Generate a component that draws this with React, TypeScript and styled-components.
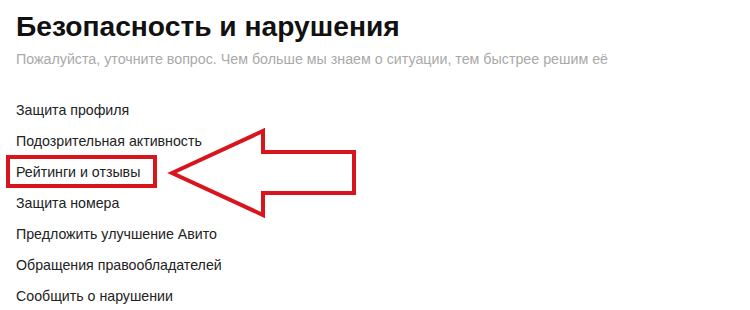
import React from "react";
import styled, { createGlobalStyle } from "styled-components";

const GlobalStyle = createGlobalStyle`
  html, body {
    margin: 0;
    padding: 0;
    background: #ffffff;
  }
  body {
    font-family: "Liberation Sans", Arial, sans-serif;
  }
`;

const Page = styled.div`
  position: relative;
  width: 750px;
  height: 310px;
  overflow: hidden;
  background: #ffffff;
  padding: 12px 0 0 16px;
  box-sizing: border-box;
`;

const Title = styled.h1`
  margin: 0;
  font-size: 28.2px;
  line-height: 28px;
  font-weight: 700;
  color: #111111;
`;

const Subtitle = styled.p`
  margin: 9px 0 0;
  font-size: 14.25px;
  line-height: 20px;
  color: #a9a9a9;
`;

const List = styled.ul`
  list-style: none;
  margin: 26px 0 0;
  padding: 0;
  display: flex;
  flex-direction: column;
`;

const Item = styled.li`
  font-size: 14.2px;
  line-height: 31px;
  color: #222222;
`;

const Annotation = styled.svg`
  position: absolute;
  left: 0;
  top: 0;
  pointer-events: none;
`;

const items = [
  "Защита профиля",
  "Подозрительная активность",
  "Рейтинги и отзывы",
  "Защита номера",
  "Предложить улучшение Авито",
  "Обращения правообладателей",
  "Сообщить о нарушении",
];

export default function App() {
  return (
    <>
      <GlobalStyle />
      <Page>
        <Title>Безопасность и нарушения</Title>
        <Subtitle>
          Пожалуйста, уточните вопрос. Чем больше мы знаем о ситуации, тем быстрее решим её
        </Subtitle>
        <List>
          {items.map((t) => (
            <Item key={t}>{t}</Item>
          ))}
        </List>
        <Annotation width="750" height="310" viewBox="0 0 750 310">
          <rect x="8" y="157" width="147" height="29" fill="none" stroke="#d8141d" strokeWidth="4" />
          <polygon
            points="172,173 263,131 263,152 354,152 354,193 263,193 263,215"
            fill="none"
            stroke="#d8141d"
            strokeWidth="4"
            strokeLinejoin="miter"
          />
        </Annotation>
      </Page>
    </>
  );
}
